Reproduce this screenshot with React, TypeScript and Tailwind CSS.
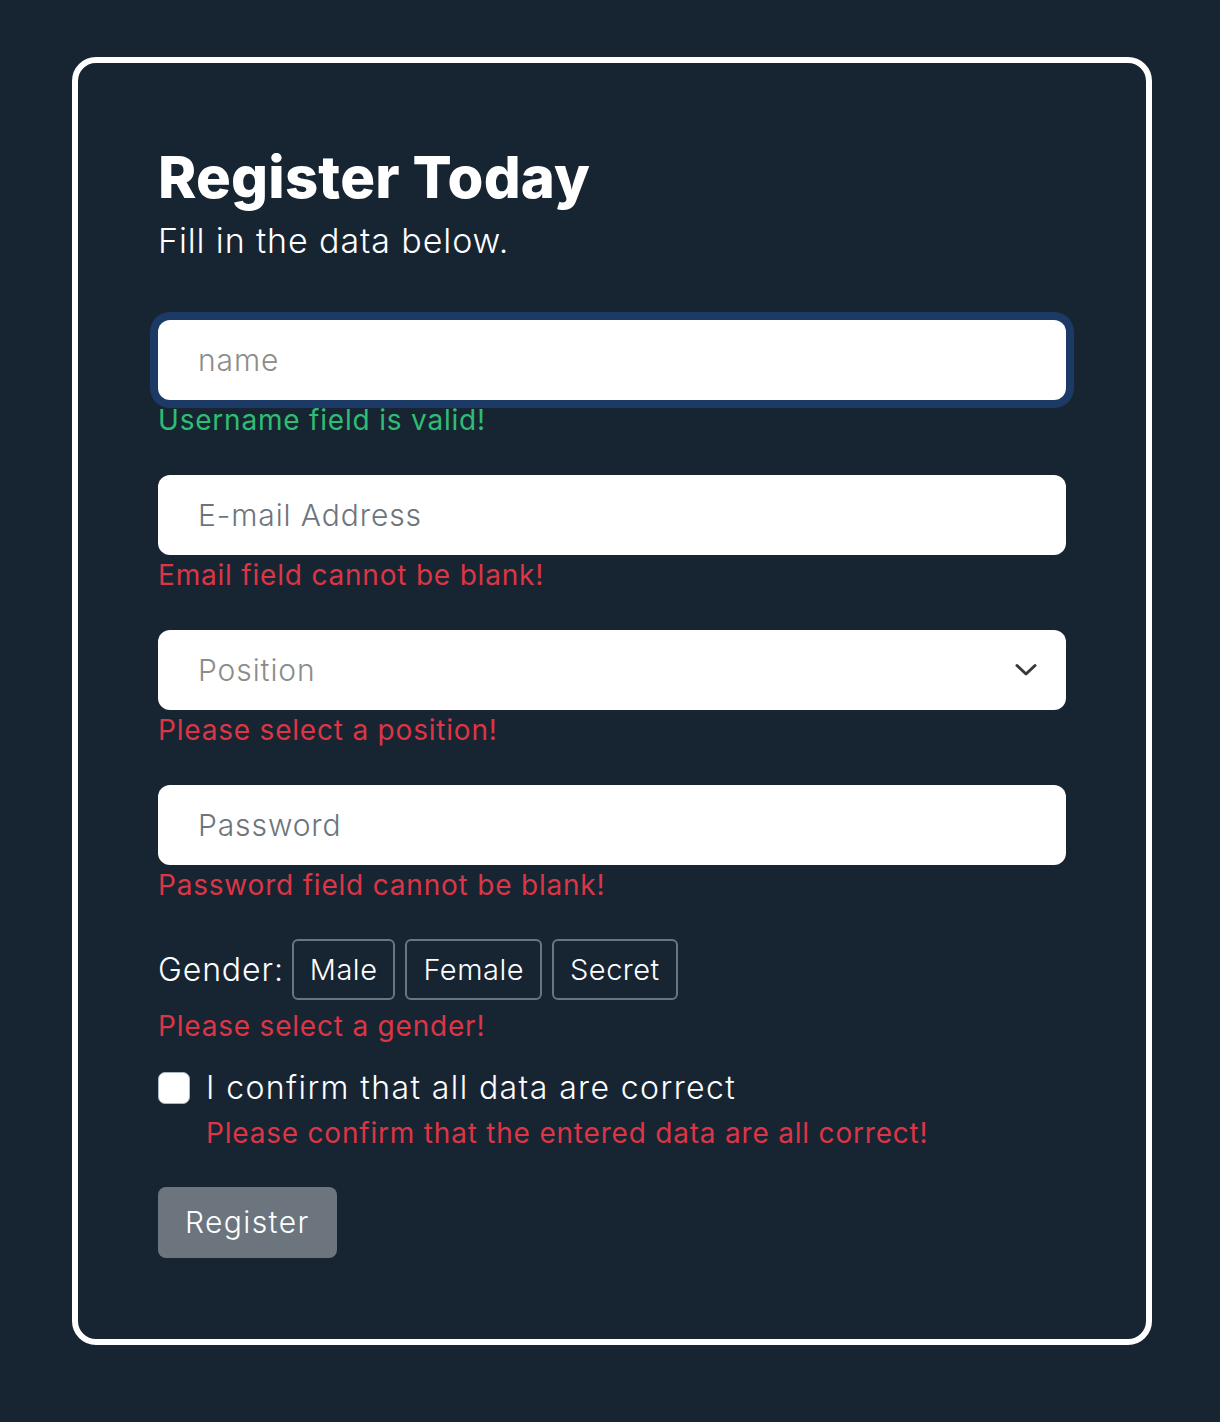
export default function App() {
  const fieldClass =
    "w-full h-[80px] rounded-[12px] bg-white px-[40px] text-[30px] font-light tracking-[0.9px] text-[#212529] outline-none placeholder:text-[#6c757d]";
  const msgClass = "text-[28px] leading-[40px] tracking-[0.8px]";

  return (
    <div className="min-h-[1422px] bg-[#172533] pl-[72px] pr-[68px] pt-[57px] font-['Inter',sans-serif]">
      <div className="h-[1288px] rounded-[24px] border-[6px] border-white px-[80px] pt-[79px]">
        {/* Heading */}
        <h1 className="text-[58px] font-extrabold leading-[70px] tracking-[0.2px] text-white">Register Today</h1>
        <p className="mt-[7px] text-[34px] font-light leading-[44px] tracking-[0.9px] text-white">
          Fill in the data below.
        </p>

        <form className="mt-[57px]">
          <div className="mb-[35px]">
            <input className={`${fieldClass} ring-8 ring-[#1b3a66] placeholder:text-[#8c8c8c]`} placeholder="name" />
            <div className={`${msgClass} text-[#2ebd74]`}>Username field is valid!</div>
          </div>

          <div className="mb-[35px]">
            <input className={fieldClass} placeholder="E-mail Address" />
            <div className={`${msgClass} text-[#dc3545]`}>Email field cannot be blank!</div>
          </div>

          <div className="mb-[35px]">
            <div className="flex h-[80px] w-full items-center justify-between rounded-[12px] bg-white pl-[40px] pr-[29px]">
              <span className="text-[30px] font-light tracking-[0.9px] text-[#8c8c8c]">Position</span>
              <svg width="22" height="14" viewBox="0 0 22 14" fill="none">
                <path d="M2 2.5 L11 11 L20 2.5" stroke="#343a40" strokeWidth="3" strokeLinecap="round" strokeLinejoin="round" />
              </svg>
            </div>
            <div className={`${msgClass} text-[#dc3545]`}>Please select a position!</div>
          </div>

          <div className="mb-[34px]">
            <input type="password" className={fieldClass} placeholder="Password" />
            <div className={`${msgClass} text-[#dc3545]`}>Password field cannot be blank!</div>
          </div>

          <div>
            <div className="flex items-center gap-[10px]">
              <span className="mr-[-2px] text-[32px] font-light tracking-[0.9px] text-white">Gender:</span>
              {["Male", "Female", "Secret"].map((g) => (
                <button
                  key={g}
                  type="button"
                  className="h-[61px] rounded-[6px] border-2 border-[#6c757d] px-[16px] text-[29px] font-light tracking-[0.5px] text-white"
                >
                  {g}
                </button>
              ))}
            </div>
            <div className={`mt-[6px] ${msgClass} text-[#dc3545]`}>Please select a gender!</div>
          </div>

          <div className="mt-[22px]">
            <label className="flex items-center gap-[16px]">
              <span className="h-[32px] w-[32px] shrink-0 rounded-[7px] border border-[#adb5bd] bg-white" />
              <span className="text-[32px] font-light leading-[40px] tracking-[1.4px] text-white">
                I confirm that all data are correct
              </span>
            </label>
            <div className={`mt-[5px] pl-[48px] ${msgClass} text-[#dc3545]`}>
              Please confirm that the entered data are all correct!
            </div>
          </div>

          <button
            type="button"
            className="mt-[34px] h-[71px] rounded-[8px] bg-[#6c757d] px-[27px] text-[30px] font-light tracking-[1.4px] text-white"
          >
            Register
          </button>
        </form>
      </div>
    </div>
  );
}
